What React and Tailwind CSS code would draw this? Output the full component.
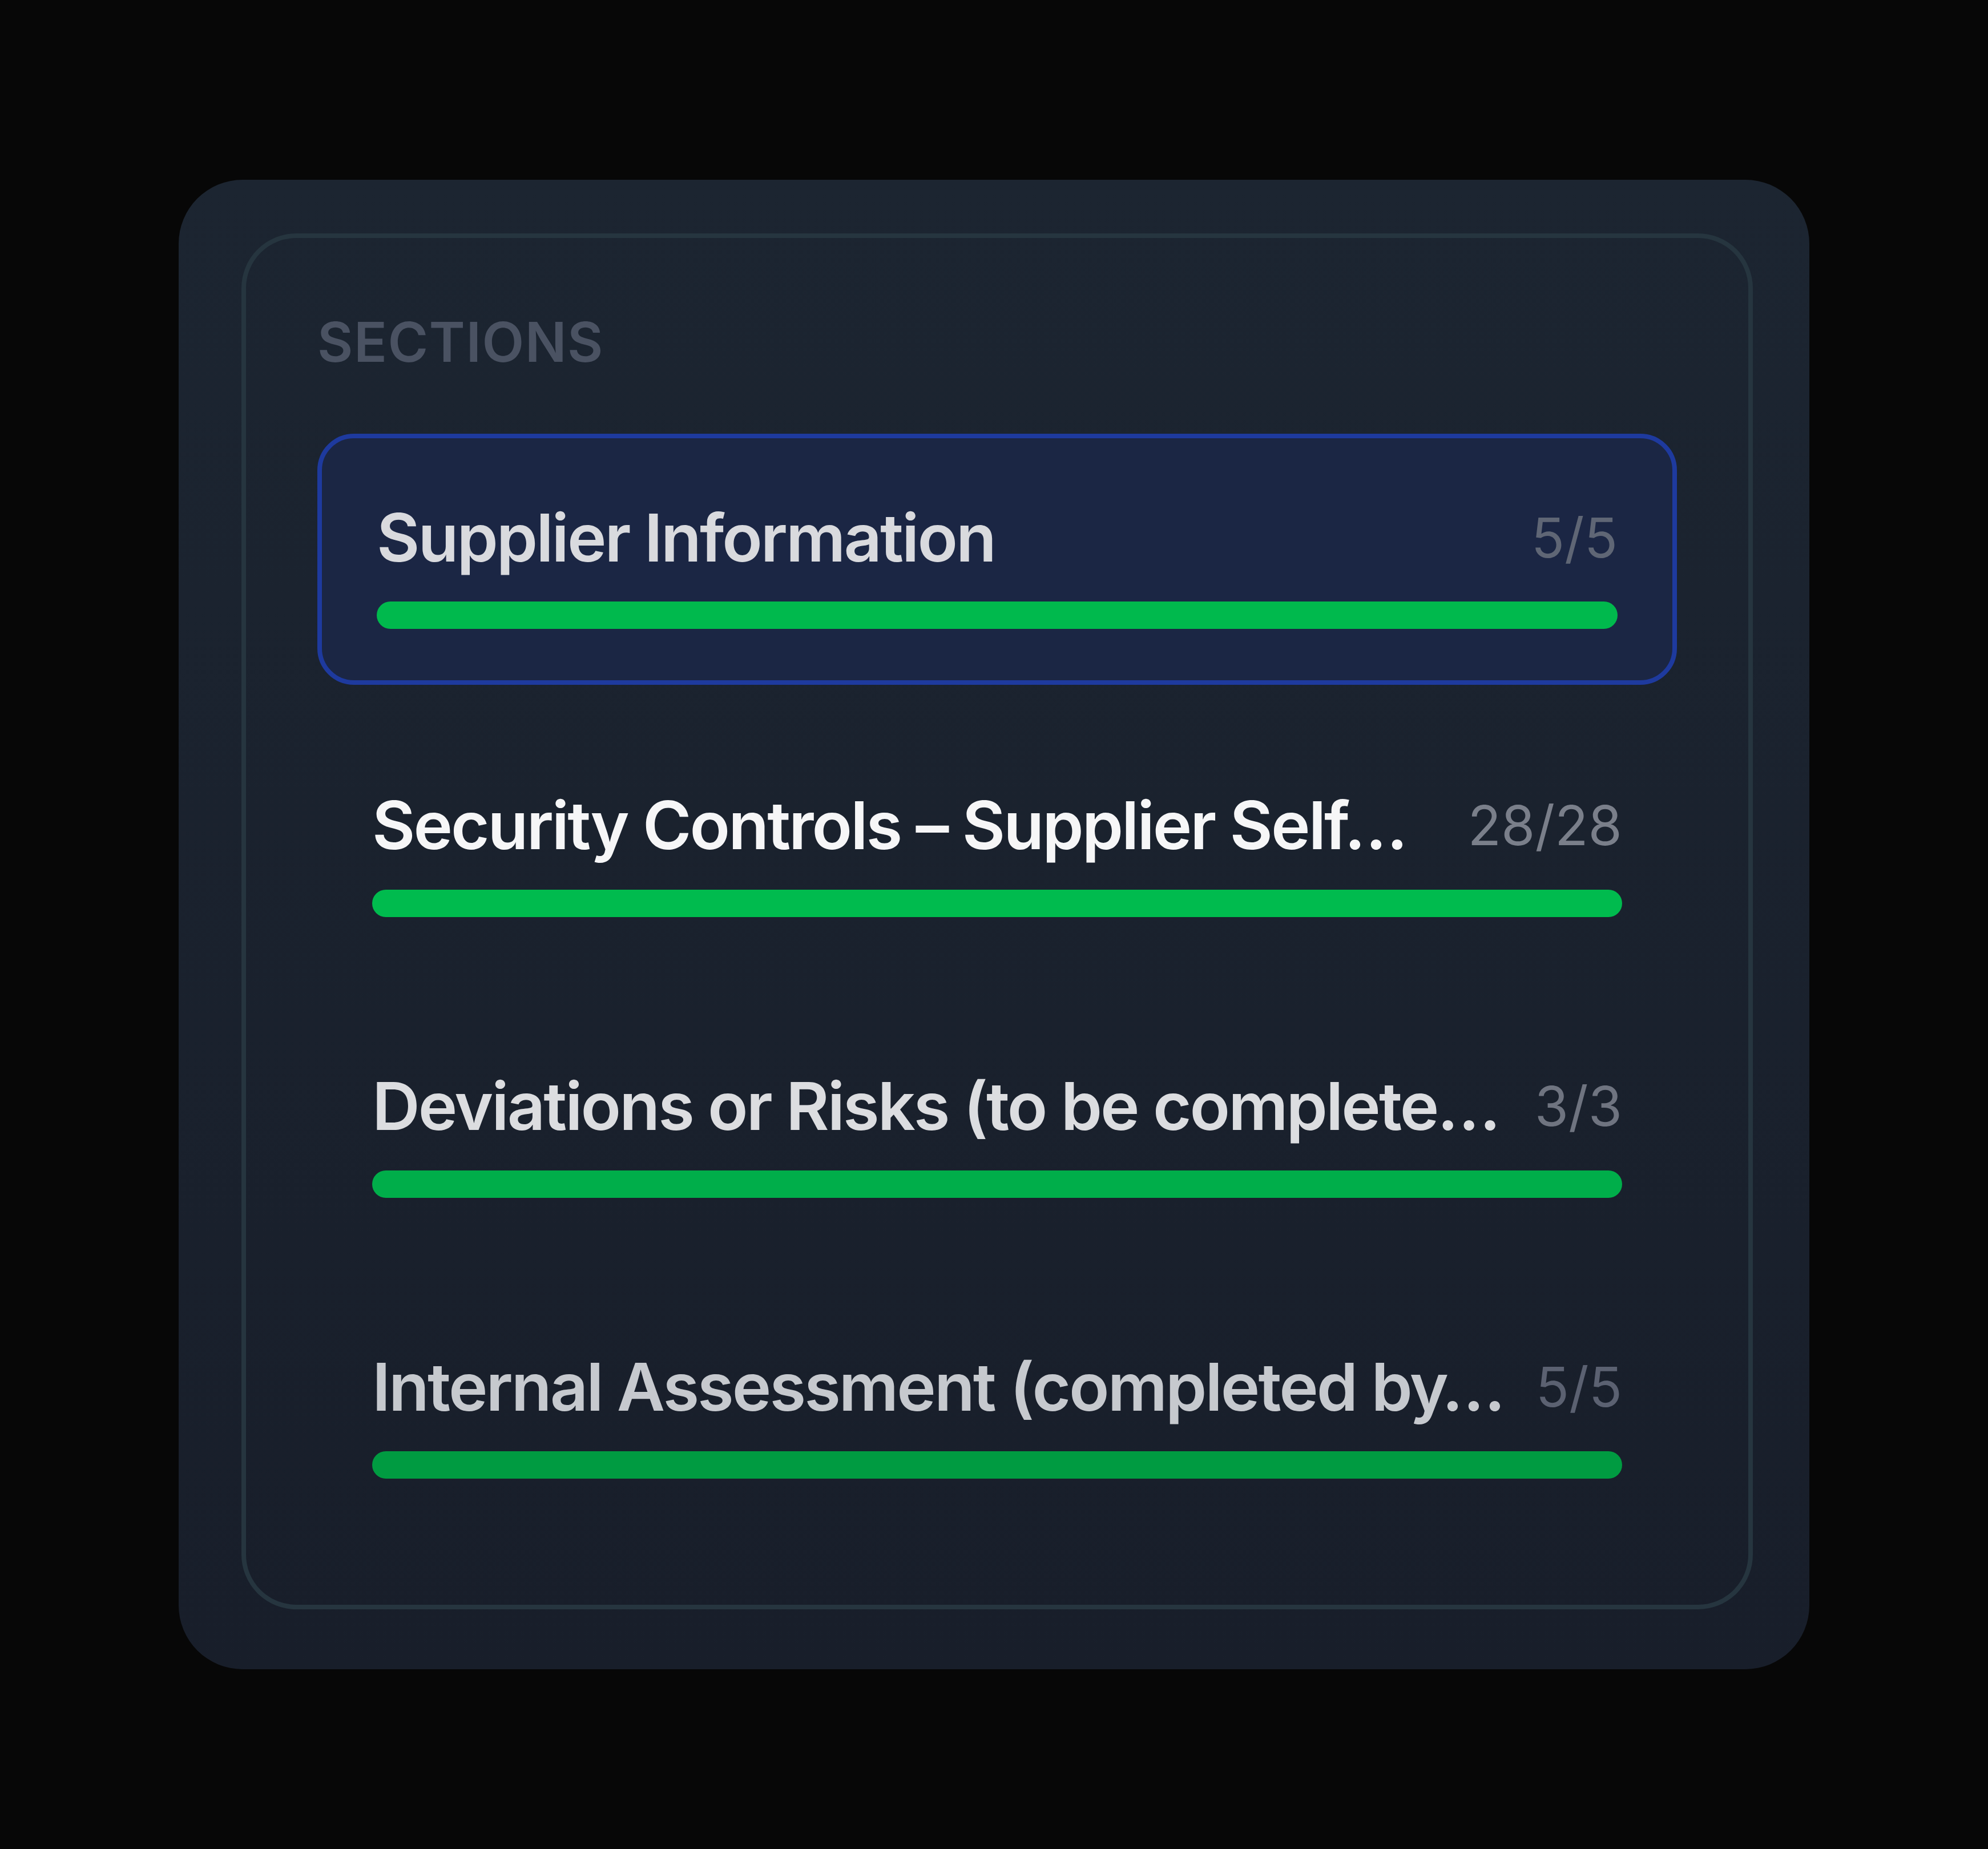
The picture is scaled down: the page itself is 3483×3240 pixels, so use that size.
const sections = [
  {
    title: "Supplier Information",
    count: "5/5",
    active: true,
    titleColor: "text-[#d9dade]",
    countColor: "text-[#5f6675]",
    bar: "bg-[#00b94d]",
  },
  {
    title: "Security Controls – Supplier Self…",
    count: "28/28",
    titleColor: "text-[#f6f6f7]",
    countColor: "text-[#7a7f8a]",
    bar: "bg-[#00bb4e]",
  },
  {
    title: "Deviations or Risks (to be complete…",
    count: "3/3",
    titleColor: "text-[#dcdde0]",
    countColor: "text-[#6f7480]",
    bar: "bg-[#00ae4a]",
  },
  {
    title: "Internal Assessment (completed by…",
    count: "5/5",
    titleColor: "text-[#c6c9ce]",
    countColor: "text-[#5b6171]",
    bar: "bg-[#009b41]",
  },
];

const SectionItem = ({ item }) => {
  return (
    <div
      className={
        item.active
          ? "mb-[7px] h-[440px] rounded-[64px] border-[8px] border-[#1e3a9e] bg-[#1b2644] px-[96px] pt-[99px]"
          : "h-[424px] px-[96px] pt-[96px]"
      }
    >
      <div className="flex h-[150px] items-center justify-between gap-[48px]">
        <span
          className={`whitespace-nowrap text-[116px] font-semibold leading-[150px] tracking-[-3px] ${item.titleColor}`}
        >
          {item.title}
        </span>
        <span
          className={`shrink-0 text-[96px] leading-[150px] ${item.countColor}`}
        >
          {item.count}
        </span>
      </div>
      <div
        className={`h-[48px] w-full rounded-full ${item.bar} ${
          item.active ? "mt-[37px]" : "mt-[38px]"
        }`}
      />
    </div>
  );
};

export default function App() {
  return (
    <div
      className="flex h-[3240px] w-[3483px] items-center justify-center bg-[#070707]"
      style={{ fontFamily: "Inter, 'Noto Sans', sans-serif" }}
    >
      <div className="w-[2857px] rounded-[112px] bg-gradient-to-b from-[#1c2531] to-[#181e2a] pb-[105px] pl-[110px] pr-[99px] pt-[94px]">
        <div className="rounded-[96px] border-[8px] border-[#26353f] px-[125px] pb-[129px] pt-[118px]">
          <h3 className="text-[96px] font-semibold uppercase leading-[128px] tracking-[0.015em] text-[#4a5262]">
            Sections
          </h3>
          <div className="mt-[97px] flex flex-col gap-[68px]">
            {sections.map((item) => (
              <SectionItem key={item.title} item={item} />
            ))}
          </div>
        </div>
      </div>
    </div>
  );
}
